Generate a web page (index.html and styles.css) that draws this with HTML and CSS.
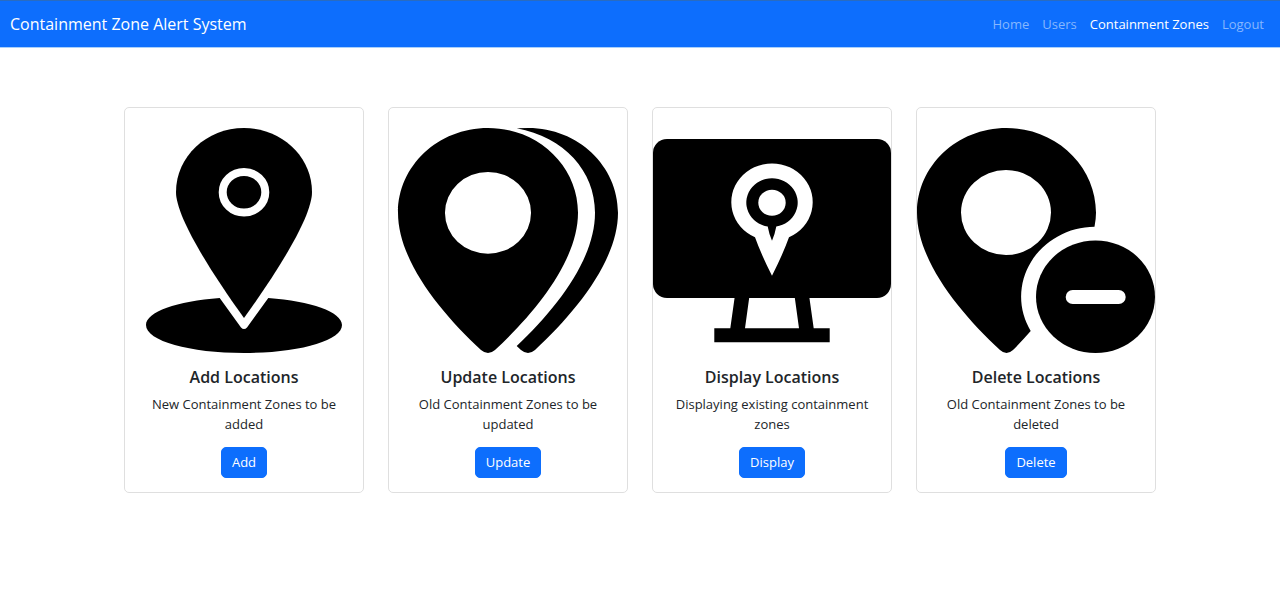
FILE: index.html
```html
<!DOCTYPE html>
<html lang="en">
<head>
<meta charset="utf-8">
<meta name="viewport" content="width=device-width, initial-scale=1">
<title>Containment Zone Alert System</title>
<link rel="stylesheet" href="styles.css">
</head>
<body>
<header class="navbar">
  <a class="brand" href="#">Containment Zone Alert System</a>
  <nav class="nav-links">
    <a href="#">Home</a>
    <a href="#">Users</a>
    <a class="active" href="#" aria-current="page">Containment Zones</a>
    <a href="#">Logout</a>
  </nav>
</header>
<main class="cards">
  <article class="card">
    <svg class="card-image" viewBox="0 0 238 225" aria-hidden="true">
      <path d="M94.700 170C52 173 21 184 21 197C21 213 65 225 119 225S217 213 217 197C217 184 186 173 143.300 170L122 199.500Q119 202.500 116 199.500Z"/>
      <path d="M119 0C81.500 0 51 28.500 51 64C51 88 83 140 119 190C155 140 187 88 187 64C187 28.500 156.500 0 119 0Z"/>
      <ellipse class="ring" cx="119" cy="64.300" rx="21.300" ry="20.300"/>
    </svg>
    <div class="card-body">
      <h2>Add Locations</h2>
      <p>New Containment Zones to be added</p>
      <button type="button">Add</button>
    </div>
  </article>
  <article class="card">
    <svg class="card-image" viewBox="0 0 238 225" aria-hidden="true">
      <path fill-rule="evenodd" d="M99 0C49 0 9 38 9 84.700C9 132 51 184 92 222Q99 228 106 222C147 184 189 132 189 84.700C189 38 149 0 99 0ZM99 44A43 40.800 0 0 1 99 125.700A43 40.800 0 0 1 99 44Z"/>
      <path d="M127.700 .300Q133 0 139.300 0C189 0 229 38 229 84.700C229 132 187 184 146 222Q139 228 132 222L127.700 218C168 180 206 131 206 84.700C206 43 175 9 127.700 .300Z"/>
    </svg>
    <div class="card-body">
      <h2>Update Locations</h2>
      <p>Old Containment Zones to be updated</p>
      <button type="button">Update</button>
    </div>
  </article>
  <article class="card">
    <svg class="card-image" viewBox="0 0 238 225" aria-hidden="true">
      <rect y="11" width="238" height="159" rx="14"/>
      <path d="M81.700 169H96.300L92 200.300H146L141.700 169H156.300L160.700 200.300H176.700V214.300H61.300V200.300H77.300Z"/>
      <path class="hole" d="M102 109.300A40.700 38.700 0 1 1 136 109.300Q130 126 119 147.700Q108 126 102 109.300Z"/>
      <path d="M114.700 98.600A25.700 24.300 0 1 1 123.300 98.600Q122 106 119 112.700Q116 106 114.700 98.600Z"/>
      <ellipse class="hole" cx="119" cy="74.700" rx="13.700" ry="13"/>
    </svg>
    <div class="card-body">
      <h2>Display Locations</h2>
      <p>Displaying existing containment zones</p>
      <button type="button">Display</button>
    </div>
  </article>
  <article class="card">
    <svg class="card-image" viewBox="0 0 238 225" aria-hidden="true">
      <path fill-rule="evenodd" d="M89.500 0C40 0 0 38 0 84.700C0 132 42 184 83 222Q89.500 228 96 222Q105 213 113.700 203A74.700 70 0 0 1 177.500 98.700Q179 91 179 84.700C179 38 139 0 89.500 0ZM89 42A45 42.500 0 0 1 89 127A45 42.500 0 0 1 89 42Z"/>
      <ellipse cx="178.500" cy="168.700" rx="59.500" ry="56.300"/>
      <rect class="hole" x="148.700" y="162" width="60" height="14" rx="7"/>
    </svg>
    <div class="card-body">
      <h2>Delete Locations</h2>
      <p>Old Containment Zones to be deleted</p>
      <button type="button">Delete</button>
    </div>
  </article>
</main>
</body>
</html>
```
FILE: styles.css
```css
* {
  box-sizing: border-box;
}

body {
  margin: 0;
  background: #fff;
  color: #212529;
  font: 13px/20px "Open Sans", "Noto Sans", sans-serif;
}

.navbar {
  display: flex;
  align-items: center;
  justify-content: space-between;
  min-height: 48px;
  padding: 0 16px 0 10px;
  border-top: 1px solid #2a6cc0;
  border-bottom: 1px solid #a9d0fb;
  background: #0d6efd;
}

.navbar a {
  color: #fff;
  text-decoration: none;
}

.navbar .brand {
  font-size: 16px;
}

.navbar .nav-links {
  display: flex;
  gap: 13px;
}

.navbar .nav-links a {
  color: #86b7fe;
}

.navbar .nav-links .active {
  color: #fff;
}

.cards {
  display: grid;
  grid-template-columns: repeat(4, 1fr);
  gap: 24px;
  max-width: 1032px;
  margin: 59px auto;
}

.card {
  padding-top: 20px;
  border: 1px solid #dfdfdf;
  border-radius: 5px;
  text-align: center;
}

.card-image {
  display: block;
  width: 100%;
}

.ring {
  fill: none;
  stroke: #fff;
  stroke-width: 8px;
}

.hole {
  fill: #fff;
}

.card-body {
  padding: 14px;
}

.card h2 {
  margin: 0 0 7px;
  font-size: 16px;
  font-weight: 600;
  line-height: 20px;
}

.card p {
  margin: 0 0 13px;
}

.card button {
  display: block;
  margin: 0 auto;
  padding: 5px 10px;
  border: 1px solid #0d6efd;
  border-radius: 5px;
  background: #0d6efd;
  color: #fff;
  font: inherit;
  line-height: 19px;
}
```
